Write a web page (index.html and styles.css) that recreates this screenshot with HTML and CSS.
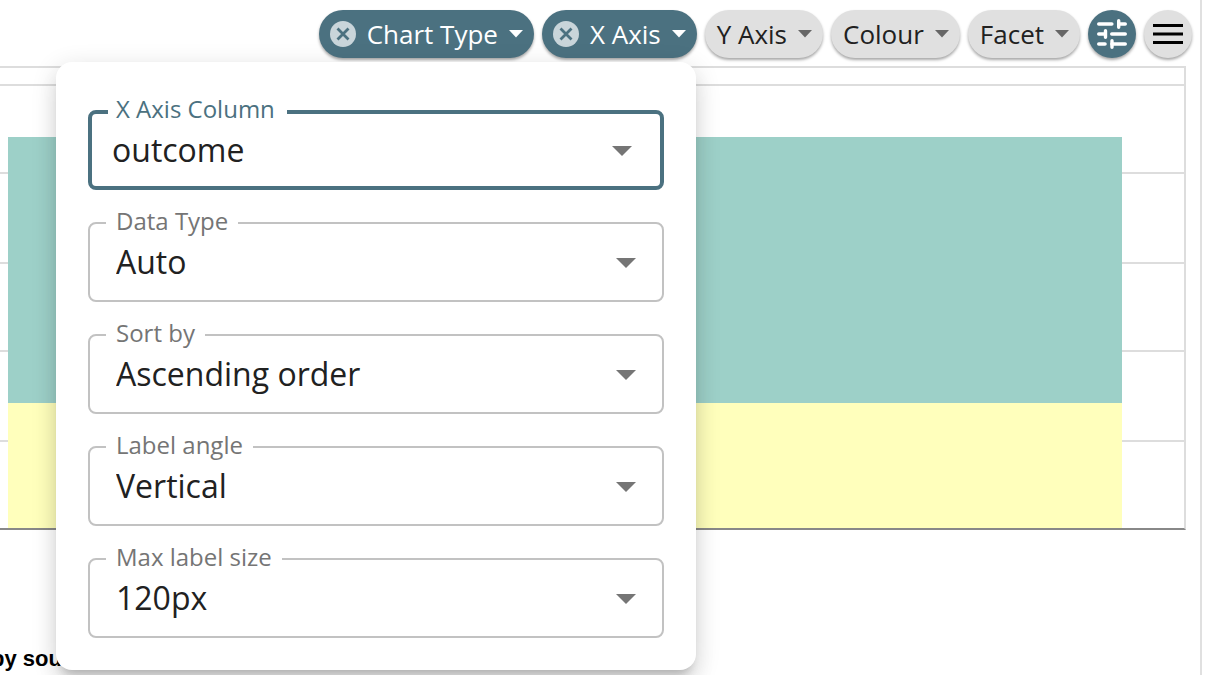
FILE: index.html
```html
<!DOCTYPE html>
<html lang="en">
<head>
<meta charset="utf-8">
<meta name="viewport" content="width=device-width, initial-scale=1">
<title>Chart editor</title>
<link rel="stylesheet" href="styles.css">
</head>
<body>
<main class="panel">
  <div class="toolbar" role="toolbar" aria-label="Chart options">
    <div class="chip chip-active">
      <button class="chip-clear" type="button" aria-label="Clear chart type">
        <svg width="26" height="26" viewBox="0 0 26 26"><circle cx="13" cy="13" r="13" fill="#c9d5da"/><path d="M7.500 7.500l11 11m0-11l-11 11" stroke="#4b7180" stroke-width="2.800"/></svg>
      </button>
      <button class="chip-label" type="button">Chart Type<svg class="caret" width="14" height="8" viewBox="0 0 14 8"><path d="M0 0h14L7 7.500z"/></svg></button>
    </div>
    <div class="chip chip-active">
      <button class="chip-clear" type="button" aria-label="Clear X axis">
        <svg width="26" height="26" viewBox="0 0 26 26"><circle cx="13" cy="13" r="13" fill="#c9d5da"/><path d="M7.500 7.500l11 11m0-11l-11 11" stroke="#4b7180" stroke-width="2.800"/></svg>
      </button>
      <button class="chip-label" type="button" aria-expanded="true">X Axis<svg class="caret" width="14" height="8" viewBox="0 0 14 8"><path d="M0 0h14L7 7.500z"/></svg></button>
    </div>
    <div class="chip"><button class="chip-label" type="button">Y Axis<svg class="caret" width="14" height="8" viewBox="0 0 14 8"><path d="M0 0h14L7 7.500z"/></svg></button></div>
    <div class="chip"><button class="chip-label" type="button">Colour<svg class="caret" width="14" height="8" viewBox="0 0 14 8"><path d="M0 0h14L7 7.500z"/></svg></button></div>
    <div class="chip"><button class="chip-label" type="button">Facet<svg class="caret" width="14" height="8" viewBox="0 0 14 8"><path d="M0 0h14L7 7.500z"/></svg></button></div>
    <button class="round round-active" type="button" aria-label="Settings">
      <svg width="48" height="48" viewBox="0 0 48 48" fill="none" stroke="#fff" stroke-linecap="round">
        <path stroke-width="3.600" d="M10.800 14h13M31 14h6.200M10.800 24h6M23.800 24h13.400M10.800 34h6.200M24 34h13.200"/>
        <path stroke-width="3.400" d="M30.700 10.700v6.600M17.500 20.700v6.600M24 30.700v6.600"/>
      </svg>
    </button>
    <button class="round" type="button" aria-label="Menu">
      <svg width="48" height="48" viewBox="0 0 48 48"><path d="M9 14h30v3H9zM9 22.500h30v3H9zM9 31h30v3H9z"/></svg>
    </button>
  </div>

  <figure class="chart">
    <div class="facet-header"></div>
    <div class="plot">
      <div class="gridlines"><i></i><i></i><i></i><i></i><i></i></div>
      <div class="bar"><div class="segment-top"></div><div class="segment-bottom"></div></div>
    </div>
    <figcaption class="caption">by source,</figcaption>
  </figure>
</main>

<form class="menu">
  <div class="field field-focused">
    <label for="column">X Axis Column</label>
    <select id="column"><option>outcome</option></select>
    <svg class="arrow" width="20" height="10" viewBox="0 0 20 10"><path d="M0 0h20L10 10z"/></svg>
  </div>
  <div class="field">
    <label for="data-type">Data Type</label>
    <select id="data-type"><option>Auto</option></select>
    <svg class="arrow" width="20" height="10" viewBox="0 0 20 10"><path d="M0 0h20L10 10z"/></svg>
  </div>
  <div class="field">
    <label for="sort">Sort by</label>
    <select id="sort"><option>Ascending order</option></select>
    <svg class="arrow" width="20" height="10" viewBox="0 0 20 10"><path d="M0 0h20L10 10z"/></svg>
  </div>
  <div class="field">
    <label for="angle">Label angle</label>
    <select id="angle"><option>Vertical</option></select>
    <svg class="arrow" width="20" height="10" viewBox="0 0 20 10"><path d="M0 0h20L10 10z"/></svg>
  </div>
  <div class="field">
    <label for="label-size">Max label size</label>
    <select id="label-size"><option>120px</option></select>
    <svg class="arrow" width="20" height="10" viewBox="0 0 20 10"><path d="M0 0h20L10 10z"/></svg>
  </div>
</form>
</body>
</html>
```
FILE: styles.css
```css
* {
  box-sizing: border-box;
}

body {
  margin: 0;
  background: #fff;
  color: #212121;
  font-family: "Open Sans", "Noto Sans", sans-serif;
}

button {
  border: 0;
  padding: 0;
  background: none;
  color: inherit;
  font: inherit;
  cursor: pointer;
}

svg {
  display: block;
  flex: none;
}

.panel {
  min-height: 100vh;
  margin-right: 19px;
  border-right: 2px solid #e0e0e0;
  overflow: hidden;
}

.toolbar {
  display: flex;
  justify-content: flex-end;
  gap: 8px;
  padding: 10px 8px 8px;
}

.chip,
.round {
  height: 48px;
  border-radius: 24px;
  background: #e0e0e0;
  box-shadow: 0 2px 3px rgba(0, 0, 0, 0.35);
}

.chip {
  display: flex;
  align-items: center;
  gap: 11px;
  padding: 0 11px 0 12px;
  font-size: 26px;
  line-height: 48px;
  white-space: nowrap;
}

.chip-active,
.round-active {
  background: #4b7180;
  color: #fff;
}

.chip-active {
  padding-left: 11px;
}

.chip-label {
  display: flex;
  align-items: center;
  gap: 11px;
}

.caret {
  fill: #666;
}

.chip-active .caret {
  fill: #fff;
}

.round {
  width: 48px;
}

.chart {
  margin: 0 14px 0 0;
}

.facet-header {
  height: 18px;
  border: 2px solid #ddd;
  border-width: 2px 2px 0 0;
}

.plot {
  display: grid;
  height: 446px;
  border-right: 2px solid #ddd;
  border-bottom: 2px solid #888;
}

.gridlines,
.bar {
  grid-area: 1 / 1;
}

.gridlines {
  display: grid;
  grid-template-rows: 88fr 90fr 88fr 90fr 88fr;
}

.gridlines i {
  border-top: 2px solid #ddd;
}

.bar {
  display: grid;
  grid-template-rows: 266fr 125fr;
  margin: 53px 62px 0 8px;
}

.segment-top {
  background: #9dd0c8;
}

.segment-bottom {
  background: #ffffbc;
}

.caption {
  margin: 116px 0 0 -9px;
  color: #000;
  font: bold 22px/26px "Liberation Sans", Arial, sans-serif;
}

.menu {
  position: absolute;
  top: 62px;
  left: 56px;
  display: flex;
  flex-direction: column;
  gap: 32px;
  width: 640px;
  padding: 48px 32px 32px;
  border-radius: 16px;
  background: #fff;
  box-shadow:
    0 10px 10px -6px rgba(0, 0, 0, 0.2),
    0 16px 20px 2px rgba(0, 0, 0, 0.06),
    0 6px 24px 2px rgba(0, 0, 0, 0.12);
}

.field {
  position: relative;
  display: grid;
}

.field label {
  position: absolute;
  top: -17px;
  left: 18px;
  padding: 0 10px;
  background: #fff;
  color: #757575;
  font-size: 24px;
  line-height: 32px;
}

.field select {
  appearance: none;
  height: 80px;
  margin: 0;
  padding: 0 60px 2px 26px;
  border: 2px solid #c2c2c2;
  border-radius: 8px;
  outline: 0;
  background: transparent;
  color: #212121;
  font: inherit;
  font-size: 32px;
}

.arrow {
  position: absolute;
  top: 36px;
  right: 28px;
  fill: #757575;
  pointer-events: none;
}

.field-focused label {
  left: 20px;
  padding: 0 12px 0 8px;
  color: #4b7180;
}

.field-focused select {
  padding-left: 20px;
  border: 4px solid #4b7180;
}

.field-focused .arrow {
  right: 32px;
}
```
